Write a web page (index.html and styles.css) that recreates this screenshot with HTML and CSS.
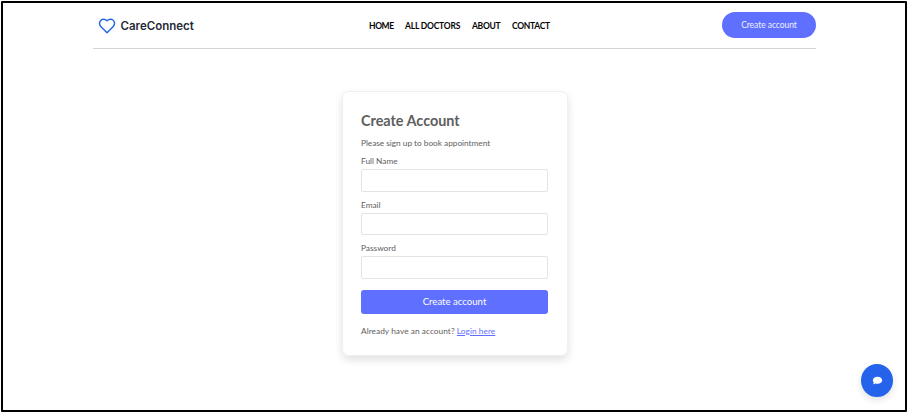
FILE: index.html
```html
<!DOCTYPE html>
<html lang="en">
<head>
<meta charset="utf-8">
<title>CareConnect</title>
<link rel="stylesheet" href="styles.css">
</head>
<body>
<div class="page">
  <header class="navbar">
    <a class="brand">
      <svg class="heart" viewBox="0 0 24 24" fill="none" stroke="currentColor" stroke-width="2" stroke-linecap="round" stroke-linejoin="round"><path d="M19 14c1.490-1.460 3-3.210 3-5.500A5.500 5.500 0 0 0 16.500 3c-1.760 0-3 .5-4.500 2-1.500-1.500-2.740-2-4.500-2A5.500 5.500 0 0 0 2 8.500c0 2.300 1.500 4.050 3 5.500l7 7Z"/></svg>
      <span class="brand-name">CareConnect</span>
    </a>
    <nav class="links">
      <a class="home">HOME</a>
      <a class="doctors">ALL DOCTORS</a>
      <a class="about">ABOUT</a>
      <a class="contact">CONTACT</a>
    </nav>
    <button class="pill"><span>Create account</span></button>
  </header>
  <main>
    <form class="card">
      <h1>Create Account</h1>
      <p class="intro">Please sign up to book appointment</p>
      <div class="field"><label for="name">Full Name</label><input id="name" type="text"></div>
      <div class="field"><label for="email">Email</label><input id="email" type="email"></div>
      <div class="field"><label for="password">Password</label><input id="password" type="password"></div>
      <button class="submit" type="button">Create account</button>
      <p class="login">Already have an account? <a>Login here</a></p>
    </form>
  </main>
  <button class="chat" aria-label="Chat">
    <svg viewBox="0 0 12 10" fill="currentColor"><path d="M6 .8C3 .8.800 2.500.800 4.700c0 1 .4 1.800 1.100 2.500-.1.700-.5 1.300-1 1.900 1.100 0 2.100-.3 2.900-.8.700.2 1.400.3 2.200.3 3 0 5.200-1.700 5.200-3.900S9 .8 6 .8Z"/></svg>
  </button>
</div>
</body>
</html>
```
FILE: styles.css
```css
* { box-sizing: border-box; }
html { overflow: hidden; }
body { margin: 0; background: #fff; font-family: Lato, "Open Sans", sans-serif; color: #5e5e5e; }
button { border: 0; padding: 0; font-family: inherit; color: #fff; }
.page { position: relative; height: 411px; margin: 1px 1px 0; border: 2px solid #000; border-radius: 1px; }
.navbar { width: 723px; height: 46px; margin: 0 0 0 90px; border-bottom: 1px solid #d2d4d5; display: flex; align-items: center; }
.brand { display: flex; align-items: center; gap: 4px; width: 276px; padding-left: 5px; }
.heart { width: 18px; height: 18px; color: #2866df; }
.brand-name { font: 600 11.500px/16px Inter, sans-serif; padding-left: .5px; color: #1f2937; }
.links { display: flex; gap: 12px; color: #050505; font-size: 8.500px; font-weight: 700; line-height: 12px; letter-spacing: -.2px; white-space: nowrap; }
.home { width: 24px; letter-spacing: -.4px; }
.doctors { width: 55px; }
.about { width: 28px; letter-spacing: -.3px; }
.contact { width: 38px; letter-spacing: -.3px; }
.pill { width: 94px; height: 26px; margin: 0 0 2px auto; border-radius: 13px; background: #5f6fff; font-size: 8.500px; font-weight: 400; letter-spacing: -.05px; color: #eef0ff; }
.card { width: 226px; height: 265px; margin: 42px 0 0 339px; padding: 19px 18px 0 18px; border: 1px solid #f0f0f0; border-radius: 7px; box-shadow: 0 4px 9px rgba(0,0,0,.12); font-size: 8.300px; }
h1 { margin: 0; font-size: 14.400px; line-height: 19px; font-weight: 700; }
.intro { margin: 8px 0 6px; line-height: 11px; letter-spacing: -.03px; }
.field { height: 43.500px; }
label { display: block; line-height: 11px; height: 14px; white-space: nowrap; padding-top: 1px; }
input { display: block; width: 187px; height: 22.500px; border: 1px solid #e3e3e3; border-radius: 2px; padding: 4px; margin: 0; }
.submit { display: block; width: 187px; height: 24px; margin-top: 4px; border-radius: 3px; background: #5f6fff; font-size: 9.600px; }
.login { margin: 11px 0 0; line-height: 12px; letter-spacing: .05px; white-space: nowrap; }
.login a { color: #5f6fff; text-decoration: underline; }
.chat { position: absolute; right: 12px; bottom: 13px; width: 32px; height: 33px; border-radius: 50%; background: #2563eb; display: flex; align-items: center; justify-content: center; box-shadow: 0 3px 7px rgba(0,0,0,.12); }
.chat svg { width: 11px; height: 9px; }
```
